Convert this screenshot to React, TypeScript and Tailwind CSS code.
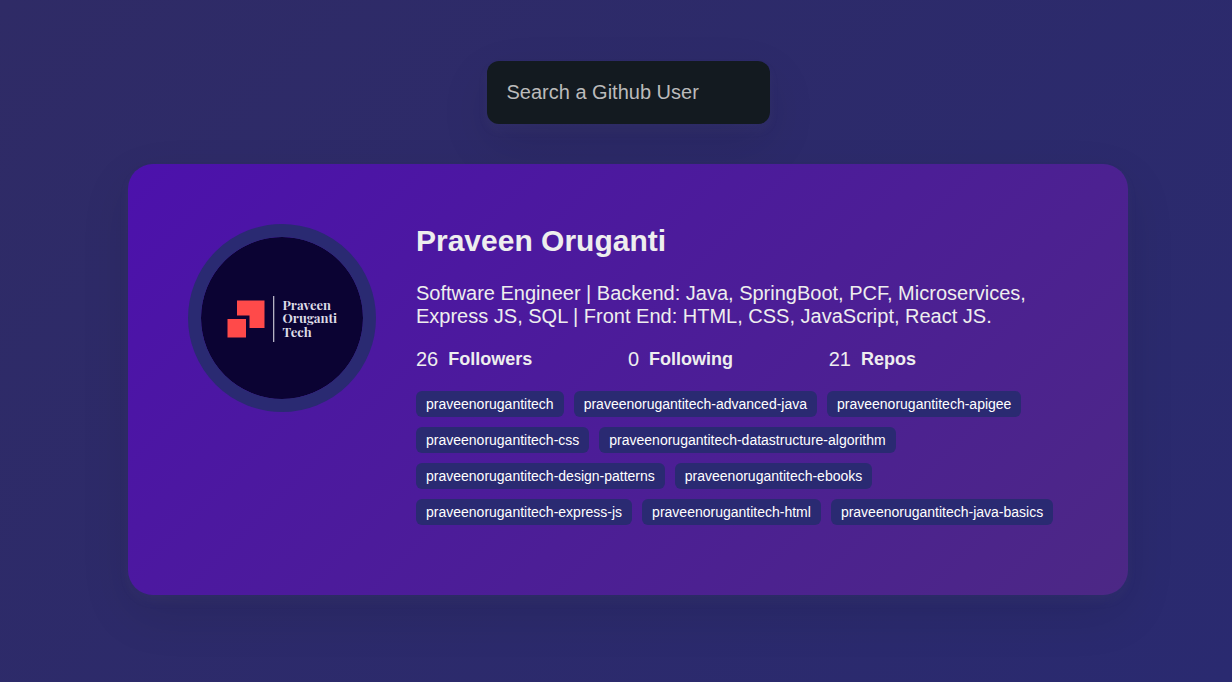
const repos = [
  "praveenorugantitech",
  "praveenorugantitech-advanced-java",
  "praveenorugantitech-apigee",
  "praveenorugantitech-css",
  "praveenorugantitech-datastructure-algorithm",
  "praveenorugantitech-design-patterns",
  "praveenorugantitech-ebooks",
  "praveenorugantitech-express-js",
  "praveenorugantitech-html",
  "praveenorugantitech-java-basics",
];

const stats = [
  { value: 26, label: "Followers" },
  { value: 0, label: "Following" },
  { value: 21, label: "Repos" },
];

function Avatar() {
  return (
    <svg
      viewBox="0 0 162 162"
      role="img"
      aria-label="Praveen Oruganti Tech"
      className="box-border size-[188px] shrink-0 rounded-full border-[13px] border-[#2a2a72] bg-[#0b0333] bg-clip-padding"
    >
      <path d="M36 63.500h27.500v27.500H48.500V78.500H36z" fill="#ff4a4a" />
      <rect x="26.500" y="82" width="18.500" height="18.500" fill="#ff4a4a" />
      <rect x="72" y="59" width="1.300" height="46" fill="#b5b2c4" />
      <text
        fill="#dddbe6"
        fontFamily="'Playfair Display', 'Liberation Serif', serif"
        fontWeight="700"
        fontSize="13"
      >
        <tspan x="81.500" y="72.500">Praveen</tspan>
        <tspan x="81.500" y="86">Oruganti</tspan>
        <tspan x="81.500" y="99.500">Tech</tspan>
      </text>
    </svg>
  );
}

export default function App() {
  return (
    <main className="flex min-h-screen flex-col items-center bg-linear-[315deg,#2a2a70_0%,#2f2b66_100%] py-[61px] pr-6 pl-12 font-['Liberation_Sans',Arial,sans-serif] text-xl leading-[23px] text-[#eeeeee]">
      <form className="mb-10" onSubmit={(event) => event.preventDefault()}>
        <input
          type="text"
          aria-label="Search a Github User"
          placeholder="Search a Github User"
          className="block h-[63px] w-[283px] max-w-full rounded-xl bg-[#131a20] px-5 text-xl text-white shadow-[0_6px_12px_rgba(154,160,185,0.05),0_19px_50px_rgba(0,0,0,0.1)] outline-none placeholder:text-[#bbbbbb]"
        />
      </form>

      <article className="flex w-full max-w-[1000px] flex-col gap-10 rounded-[25px] bg-linear-[315deg,#4c2885_0%,#4c11ac_100%] p-[60px] shadow-[0_6px_12px_rgba(154,160,185,0.05),0_19px_50px_rgba(0,0,0,0.1)] md:flex-row">
        <Avatar />
        <div className="min-w-0 flex-1">
          <h2 className="text-[30px] leading-[34px] font-bold">Praveen Oruganti</h2>
          <p className="mt-6">
            Software Engineer | Backend: Java, SpringBoot, PCF, Microservices, Express JS, SQL | Front
            End: HTML, CSS, JavaScript, React JS.
          </p>
          <ul className="mt-5 flex max-w-[500px] flex-wrap justify-between">
            {stats.map((stat) => (
              <li key={stat.label} className="flex items-center">
                {stat.value}
                <strong className="ml-[10px] text-lg leading-[23px]">{stat.label}</strong>
              </li>
            ))}
          </ul>
          <div className="mt-5 flex flex-wrap gap-[10px] pb-[10px]">
            {repos.map((repo) => (
              <a
                key={repo}
                href={`https://github.com/praveenorugantitech/${repo}`}
                className="rounded-md bg-[#2a2a72] px-[10px] py-[5px] text-sm leading-4 text-white"
              >
                {repo}
              </a>
            ))}
          </div>
        </div>
      </article>
    </main>
  );
}
